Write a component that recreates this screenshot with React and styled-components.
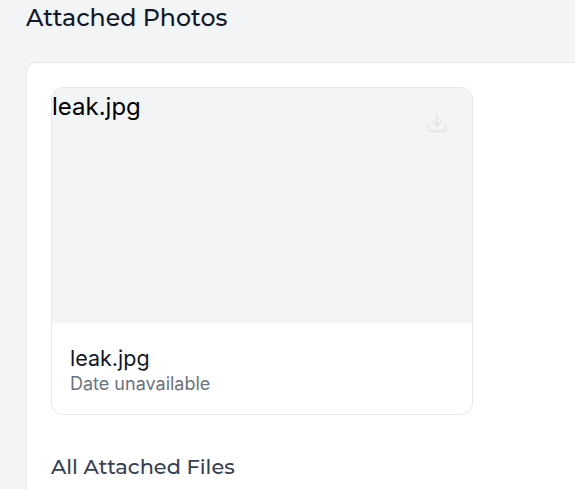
import React from "react";
import styled, { createGlobalStyle } from "styled-components";

const Global = createGlobalStyle`
  html, body { margin: 0; padding: 0; background: #f3f4f6; overflow: hidden; }
  body { font-family: Inter, "Noto Sans", sans-serif; }
`;

const Page = styled.div`
  padding: 0 0 0 26px;
  width: 620px;
  box-sizing: border-box;
`;

const Title = styled.h2`
  margin: 0 0 28px;
  padding-top: 2px;
  font-family: Montserrat, "Open Sans", sans-serif;
  font-weight: 500;
  font-size: 23.7px;
  line-height: 32px;
  color: #111827;
`;

const Card = styled.section`
  background: #fff;
  border: 1px solid #e5e7eb;
  border-radius: 10px;
  padding: 24px;
  width: 600px;
  box-sizing: border-box;
`;

const Grid = styled.div`
  display: grid;
  grid-template-columns: 422px;
`;

const PhotoCard = styled.div`
  border: 1px solid #e5e7eb;
  border-radius: 12px;
  overflow: hidden;
  background: #fff;
`;

const ImageArea = styled.div`
  position: relative;
  height: 235px;
  background: #f3f4f6;
  font-size: 24px;
  line-height: 32px;
  color: #000;
  padding: 3px 0 0 0;
  box-sizing: border-box;
`;

const IconButton = styled.div`
  position: absolute;
  top: 11px;
  right: 11px;
  width: 48px;
  height: 48px;
  border-radius: 50%;
  background: #fff;
  opacity: 0.07;
  display: flex;
  align-items: center;
  justify-content: center;
  color: #374151;
`;

const Info = styled.div`
  padding: 21px 18px 18px;
`;

const FileName = styled.div`
  font-size: 21.5px;
  line-height: 28px;
  color: #111827;
`;

const DateText = styled.div`
  font-size: 18px;
  line-height: 24px;
  color: #6b7280;
`;

const SubTitle = styled.h3`
  margin: 38px 0 0;
  font-family: Montserrat, "Open Sans", sans-serif;
  font-weight: 500;
  font-size: 20.9px;
  line-height: 28px;
  color: #374151;
`;

export default function App() {
  return (
    <Page>
      <Global />
      <Title>Attached Photos</Title>
      <Card>
        <Grid>
          <PhotoCard>
            <ImageArea>
              leak.jpg
              <IconButton>
                <svg width="22" height="22" viewBox="0 0 24 24" fill="none" stroke="currentColor" strokeWidth="2" strokeLinecap="round" strokeLinejoin="round">
                  <path d="M21 15v4a2 2 0 0 1-2 2H5a2 2 0 0 1-2-2v-4" />
                  <polyline points="7 10 12 15 17 10" />
                  <line x1="12" y1="15" x2="12" y2="3" />
                </svg>
              </IconButton>
            </ImageArea>
            <Info>
              <FileName>leak.jpg</FileName>
              <DateText>Date unavailable</DateText>
            </Info>
          </PhotoCard>
        </Grid>
        <SubTitle>All Attached Files</SubTitle>
      </Card>
    </Page>
  );
}
